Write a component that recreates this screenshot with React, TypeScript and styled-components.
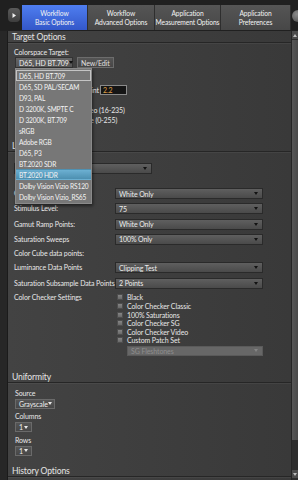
import React from 'react';
import styled, { createGlobalStyle, css } from 'styled-components';

const Global = createGlobalStyle`
  html, body { margin: 0; padding: 0; background: #1c1c1c; }
  body { font-family: Lato, "Open Sans", sans-serif; -webkit-font-smoothing: antialiased; }
  * { box-sizing: border-box; }
`;

const Frame = styled.div`
  width: 298px;
  height: 480px;
  overflow: hidden;
  display: flex;
  flex-direction: column;
  background: #1d1d1d;
`;

const TabBar = styled.div`
  height: 31px;
  flex: none;
  padding: 5px 0 1px 8px;
  display: flex;
  align-items: stretch;
  background: #202020;
`;

const Nub = styled.div<{ $side: 'left' | 'right' }>`
  flex: none;
  align-self: flex-start;
  display: flex;
  align-items: center;
  justify-content: center;
  ${(p) =>
    p.$side === 'left'
      ? css`
          width: 12px;
          height: 14px;
          margin-top: 3px;
          margin-right: 2px;
          border-radius: 4px;
          background: linear-gradient(#5a5a5a, #3e3e3e);
        `
      : css`
          width: 12px;
          height: 12px;
          margin-top: 5px;
          margin-left: 1px;
          border-radius: 50%;
          background: radial-gradient(circle at 40% 35%, #8a8a8a, #4a4a4a);
        `}
`;

const Tab = styled.div<{ $active?: boolean; $w: number }>`
  width: ${(p) => p.$w}px;
  flex: none;
  display: flex;
  flex-direction: column;
  align-items: center;
  justify-content: center;
  font-size: 6.7px;
  line-height: 9px;
  letter-spacing: -0.1px;
  color: #f2f2f2;
  white-space: nowrap;
  border-right: 1px solid #2e2e2e;
  background: ${(p) =>
    p.$active ? 'linear-gradient(#4f7ef0, #3357c9)' : 'linear-gradient(#555555, #474747)'};
`;

const Body = styled.div`
  flex: 1;
  display: flex;
  min-height: 0;
`;

const LeftStrip = styled.div`
  width: 8px;
  flex: none;
  background: #272727;
  border-right: 1px solid #1b1b1b;
`;

const Main = styled.div`
  flex: 1;
  min-width: 0;
  overflow: hidden;
  display: flex;
  flex-direction: column;
  background: linear-gradient(90deg, #434343, #393939);
`;

const Scroll = styled.div`
  width: 7px;
  flex: none;
  display: flex;
  flex-direction: column;
  background: #2d2d2d;
  border-left: 1px solid #262626;
`;

const ScrollBtn = styled.div<{ $bottom?: boolean }>`
  height: 8px;
  flex: none;
  display: flex;
  align-items: center;
  justify-content: center;
  background: #4c4c4c;
  margin-bottom: ${(p) => (p.$bottom ? '2px' : '0')};
`;

const Track = styled.div`
  flex: 1;
  display: flex;
  padding: 1px 0 30px;
`;

const Thumb = styled.div`
  flex: 1;
  background: linear-gradient(90deg, #575757, #4a4a4a);
`;

const SectionHeader = styled.div`
  height: 12px;
  flex: none;
  padding: 1px 0 0 4px;
  font-size: 8.6px;
  line-height: 10px;
  letter-spacing: -0.15px;
  color: #e4e4e4;
  border-bottom: 1px solid #262626;
  box-shadow: 0 1px 0 rgba(255, 255, 255, 0.05);
  white-space: nowrap;
`;

const SectionBody = styled.div<{ $pt: number; $pb: number }>`
  flex: none;
  display: flex;
  flex-direction: column;
  padding: ${(p) => p.$pt}px 0 ${(p) => p.$pb}px 6px;
  font-size: 7px;
  letter-spacing: -0.1px;
  color: #e8e8e8;
`;

const Label = styled.div`
  line-height: 9px;
  height: 9px;
  white-space: nowrap;
`;

const PickerRow = styled.div`
  display: flex;
  gap: 4px;
  height: 11px;
  padding-left: 1px;
`;

const SelectWrap = styled.div`
  position: relative;
  display: flex;
`;

type Variant = 'field' | 'picker' | 'mini' | 'disabled';

const Select = styled.div<{ $variant?: Variant; $w: number; $h?: number }>`
  width: ${(p) => p.$w}px;
  height: ${(p) => p.$h ?? 11}px;
  flex: none;
  display: flex;
  align-items: center;
  justify-content: space-between;
  padding: 0 4px 0 3px;
  font-size: 7px;
  white-space: nowrap;
  color: #eeeeee;
  border: 1px solid #2a2a2a;
  background: linear-gradient(#5f5f5f, #4a4a4a);
  ${(p) =>
    p.$variant === 'picker' &&
    css`
      background: linear-gradient(#666, #555);
      border-color: #333;
    `}
  ${(p) =>
    p.$variant === 'mini' &&
    css`
      background: linear-gradient(#555, #474747);
      border-color: #6a6a6a;
      padding: 0 3px 0 3px;
    `}
  ${(p) =>
    p.$variant === 'disabled' &&
    css`
      background: #676767;
      border-color: #5a5a5a;
      color: #8e8e8e;
    `}
`;

const Caret = styled.span<{ $tone?: string }>`
  flex: none;
  width: 0;
  height: 0;
  border-left: 2px solid transparent;
  border-right: 2px solid transparent;
  border-top: 3px solid ${(p) => p.$tone ?? '#121212'};
`;

const Button = styled.div`
  height: 11px;
  padding: 0 3px;
  display: flex;
  align-items: center;
  font-size: 7px;
  color: #e0e0e0;
  background: linear-gradient(#555, #464646);
  border: 1px solid #6c6c6c;
  white-space: nowrap;
`;

const List = styled.div`
  position: absolute;
  top: 100%;
  left: 0;
  z-index: 10;
  width: 77px;
  padding: 1px 0;
  background: #777777;
  border: 1px solid #8a8a8a;
  box-shadow: 1px 2px 3px rgba(0, 0, 0, 0.5);
`;

const ListItem = styled.div<{ $state?: 'current' | 'hover' }>`
  height: 11px;
  line-height: 10px;
  padding-left: 2px;
  font-size: 6.6px;
  letter-spacing: -0.15px;
  color: #f4f4f4;
  white-space: nowrap;
  border: 1px solid transparent;
  ${(p) =>
    p.$state === 'current' &&
    css`
      border-color: #c4c4c4;
    `}
  ${(p) =>
    p.$state === 'hover' &&
    css`
      background: linear-gradient(#6cb0d2, #4d8fb0);
    `}
`;

const GammaRow = styled.div`
  display: flex;
  align-items: center;
  gap: 1px;
  height: 10px;
  margin-top: 17px;
`;

const GammaLabel = styled.div`
  width: 85px;
  text-align: right;
  white-space: nowrap;
`;

const NumInput = styled.div`
  width: 27px;
  height: 10px;
  padding-left: 2px;
  line-height: 8px;
  font-size: 7px;
  color: #e0a448;
  background: #151515;
  border: 1px solid #8a8a8a;
`;

const RadioGroup = styled.div`
  display: flex;
  flex-direction: column;
  margin-top: 10px;
  padding-left: 41px;
`;

const RadioLine = styled.div`
  display: flex;
  align-items: center;
  gap: 3px;
  height: 10px;
  white-space: nowrap;
`;

const Radio = styled.span`
  width: 5px;
  height: 5px;
  border-radius: 50%;
  background: #777;
  border: 1px solid #333;
`;

const FieldGrid = styled.div`
  display: grid;
  grid-template-columns: 101px 148px;
  row-gap: 4.3px;
  margin-top: 14px;
  align-items: center;
`;

const GridLabel = styled.div<{ $top?: boolean }>`
  white-space: nowrap;
  line-height: 9px;
  align-self: ${(p) => (p.$top ? 'start' : 'center')};
`;

const Spacer = styled.div<{ $h: number }>`
  height: ${(p) => p.$h}px;
`;

const CheckList = styled.div`
  display: flex;
  flex-direction: column;
  padding-left: 2px;
`;

const CheckLine = styled.div`
  display: flex;
  align-items: center;
  gap: 4px;
  height: 8.6px;
  white-space: nowrap;
`;

const Check = styled.span`
  width: 6px;
  height: 6px;
  flex: none;
  background: linear-gradient(#858585, #6a6a6a);
  border: 1px solid #4e4e4e;
`;

const DisabledWrap = styled.div`
  padding-left: 10px;
  margin-top: 1px;
`;

const Field = styled.div`
  display: flex;
  flex-direction: column;
  align-items: flex-start;
  gap: 1px;
  padding-left: 1px;
`;

const FieldStack = styled.div`
  display: flex;
  flex-direction: column;
  gap: 3.5px;
`;

const Arrow = ({ dir, color = '#ddd' }: { dir: 'up' | 'down' | 'right'; color?: string }) => {
  const pts =
    dir === 'up' ? '1,4 3,1 5,4' : dir === 'down' ? '1,1 3,4 5,1' : '1.5,1 5,3.5 1.5,6';
  const size = dir === 'right' ? { w: 6, h: 7 } : { w: 6, h: 5 };
  return (
    <svg width={size.w} height={size.h} viewBox={`0 0 ${size.w} ${size.h}`}>
      <polygon points={pts} fill={color} />
    </svg>
  );
};

const tabs = [
  { l1: 'Workflow', l2: 'Basic Options', w: 66, active: true },
  { l1: 'Workflow', l2: 'Advanced Options', w: 67 },
  { l1: 'Application', l2: 'Measurement Options', w: 66 },
  { l1: 'Application', l2: 'Preferences', w: 70 },
];

const colorspaces = [
  'D65, HD BT.709',
  'D65, SD PAL/SECAM',
  'D93, PAL',
  'D 3200K, SMPTE C',
  'D 3200K, BT.709',
  'sRGB',
  'Adobe RGB',
  'D65, P3',
  'BT.2020 SDR',
  'BT.2020 HDR',
  'Dolby Vision Vizio RS120',
  'Dolby Vision Vizio_RS65',
];

const fields: { label: string; value?: string; h?: number }[] = [
  { label: 'Grayscale Points:', value: 'White Only' },
  { label: 'Stimulus Level:', value: '75' },
  { label: 'Gamut Ramp Points:', value: 'White Only' },
  { label: 'Saturation Sweeps', value: '100% Only' },
  { label: 'Color Cube data points:', h: 8 },
  { label: 'Luminance Data Points', value: 'Clipping Test' },
  { label: 'Saturation Subsample Data Points', value: '2 Points' },
];

const checks = [
  'Black',
  'Color Checker Classic',
  '100% Saturations',
  'Color Checker SG',
  'Color Checker Video',
  'Custom Patch Set',
];

export default function App() {
  return (
    <>
      <Global />
      <Frame>
        <TabBar>
          <Nub $side="left">
            <Arrow dir="right" color="#f0f0f0" />
          </Nub>
          {tabs.map((t) => (
            <Tab key={t.l2} $w={t.w} $active={t.active}>
              <span>{t.l1}</span>
              <span>{t.l2}</span>
            </Tab>
          ))}
          <Nub $side="right" />
        </TabBar>
        <Body>
          <LeftStrip />
          <Main>
            <SectionHeader>Target Options</SectionHeader>
            <SectionBody $pt={5} $pb={15}>
              <Label>Colorspace Target:</Label>
              <PickerRow>
                <SelectWrap>
                  <Select $variant="picker" $w={58}>
                    D65, HD BT.709
                    <Caret />
                  </Select>
                  <List>
                    {colorspaces.map((c, i) => (
                      <ListItem key={c} $state={i === 0 ? 'current' : i === 9 ? 'hover' : undefined}>
                        {c}
                      </ListItem>
                    ))}
                  </List>
                </SelectWrap>
                <Button>New/Edit</Button>
              </PickerRow>
              <GammaRow>
                <GammaLabel>Gamma Point</GammaLabel>
                <NumInput>2.2</NumInput>
              </GammaRow>
              <RadioGroup>
                <RadioLine>
                  <Radio />
                  Legal Video (16-235)
                </RadioLine>
                <RadioLine>
                  <Radio />
                  Full Range (0-255)
                </RadioLine>
              </RadioGroup>
            </SectionBody>

            <SectionHeader>Luminance</SectionHeader>
            <SectionBody $pt={11} $pb={15}>
              <Select $w={138}>
                Pattern Set
                <Caret />
              </Select>
              <FieldGrid>
                {fields.map((f) => (
                  <React.Fragment key={f.label}>
                    <GridLabel>{f.label}</GridLabel>
                    {f.value ? (
                      <Select $w={148}>
                        {f.value}
                        <Caret />
                      </Select>
                    ) : (
                      <Spacer $h={f.h ?? 11} />
                    )}
                  </React.Fragment>
                ))}
                <GridLabel $top>Color Checker Settings</GridLabel>
                <CheckList>
                  {checks.map((c) => (
                    <CheckLine key={c}>
                      <Check />
                      {c}
                    </CheckLine>
                  ))}
                  <DisabledWrap>
                    <Select $variant="disabled" $w={136} $h={10}>
                      SG Fleshtones
                      <Caret $tone="#858585" />
                    </Select>
                  </DisabledWrap>
                </CheckList>
              </FieldGrid>
            </SectionBody>

            <SectionHeader>Uniformity</SectionHeader>
            <SectionBody $pt={6} $pb={9}>
              <FieldStack>
                <Field>
                  <Label>Source</Label>
                  <Select $variant="mini" $w={40} $h={10}>
                    Grayscale
                    <Caret $tone="#e8e8e8" />
                  </Select>
                </Field>
                <Field>
                  <Label>Columns</Label>
                  <Select $variant="mini" $w={17} $h={10}>
                    1
                    <Caret $tone="#e8e8e8" />
                  </Select>
                </Field>
                <Field>
                  <Label>Rows</Label>
                  <Select $variant="mini" $w={17} $h={10}>
                    1
                    <Caret $tone="#e8e8e8" />
                  </Select>
                </Field>
              </FieldStack>
            </SectionBody>

            <SectionHeader>History Options</SectionHeader>
          </Main>
          <Scroll>
            <ScrollBtn>
              <Arrow dir="up" color="#bbb" />
            </ScrollBtn>
            <Track>
              <Thumb />
            </Track>
            <ScrollBtn $bottom>
              <Arrow dir="down" color="#bbb" />
            </ScrollBtn>
          </Scroll>
        </Body>
      </Frame>
    </>
  );
}
